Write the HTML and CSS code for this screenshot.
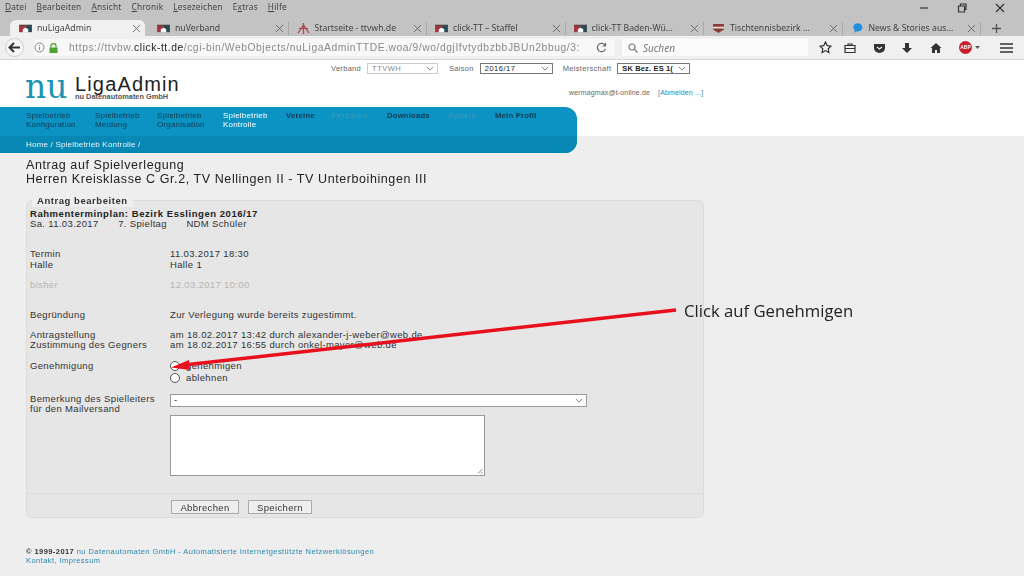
FILE: index.html
```html
<!DOCTYPE html>
<html lang="de">
<head>
<meta charset="utf-8">
<title>nuLigaAdmin</title>
<link rel="stylesheet" href="styles.css">
</head>
<body>
<svg width="0" height="0" class="defs">
  <symbol id="nu" viewBox="0 0 14 12"><path d="M0 2h7v8H0z" fill="#a8323c"/><path d="M7 2h7v8H7z" fill="#2b4a55"/><path d="M4 10V7q3-3 6 0v3z" fill="#fff"/><path d="M0 2h14v1H0z" fill="#444"/></symbol>
  <symbol id="chev" viewBox="0 0 10 6"><path d="M1 1l4 4 4-4" fill="none" stroke="#666" stroke-width="1"/></symbol>
  <symbol id="x" viewBox="0 0 10 10"><path d="M1 1l8 8M9 1l-8 8" fill="none" stroke="#666" stroke-width="1"/></symbol>
</svg>
<header class="chrome">
  <nav class="menubar">
    <span><u>D</u>atei</span><span><u>B</u>earbeiten</span><span><u>A</u>nsicht</span><span><u>C</u>hronik</span><span><u>L</u>esezeichen</span><span>E<u>x</u>tras</span><span><u>H</u>ilfe</span>
    <div class="winctl">
      <svg width="10" height="10" viewBox="0 0 10 10"><path d="M1 5h8" stroke="#333" stroke-width="1.2"/></svg>
      <svg width="10" height="10" viewBox="0 0 10 10"><path d="M1.500 3h6v6h-6zM3.500 3V1h5.500v5.500H7.500" fill="none" stroke="#333" stroke-width="1.200"/></svg>
      <svg width="10" height="10" viewBox="0 0 10 10"><path d="M1 1l8 8M9 1l-8 8" stroke="#333" stroke-width="1.200"/></svg>
    </div>
  </nav>
  <div class="tabs">
    <div class="tab active"><svg class="fav"><use href="#nu"/></svg><span class="tab-t">nuLigaAdmin</span><svg class="tx"><use href="#x"/></svg></div>
    <div class="tab"><svg class="fav"><use href="#nu"/></svg><span class="tab-t">nuVerband</span><svg class="tx"><use href="#x"/></svg></div>
    <div class="tab sep"><svg class="fav" viewBox="0 0 14 12"><path d="M7 0v12M1 11l6-9 6 9M2 6h10" fill="none" stroke="#b5444c" stroke-width="1.300"/></svg><span class="tab-t">Startseite - ttvwh.de</span><svg class="tx"><use href="#x"/></svg></div>
    <div class="tab sep"><svg class="fav"><use href="#nu"/></svg><span class="tab-t">click-TT – Staffel</span><svg class="tx"><use href="#x"/></svg></div>
    <div class="tab sep"><svg class="fav"><use href="#nu"/></svg><span class="tab-t">click-TT Baden-Wü...</span><svg class="tx"><use href="#x"/></svg></div>
    <div class="tab sep"><svg class="fav" viewBox="0 0 14 12"><path d="M1 1h12v6l-6 4-6-4z" fill="#8c3a3a"/><path d="M1 4h12v2H1z" fill="#e8dcc8"/></svg><span class="tab-t">Tischtennisbezirk ...</span><svg class="tx"><use href="#x"/></svg></div>
    <div class="tab sep"><svg class="fav" viewBox="0 0 14 12"><path d="M3 11l1-3a5 4.500 0 1 1 2 1z" fill="#1d8fe0"/></svg><span class="tab-t">News &amp; Stories aus...</span><svg class="tx"><use href="#x"/></svg></div>
    <div class="tab-plus sep"><svg width="11" height="11" viewBox="0 0 11 11"><path d="M5.500 1v9M1 5.500h9" stroke="#555" stroke-width="1.300"/></svg></div>
  </div>
  <div class="toolbar">
    <div class="back"><svg width="13" height="11" viewBox="0 0 13 11"><path d="M1 5.500h11M6 1L1.500 5.500 6 10" fill="none" stroke="#333" stroke-width="2"/></svg></div>
    <div class="urlbar">
      <svg class="ic" width="11" height="11" viewBox="0 0 11 11"><circle cx="5.500" cy="5.500" r="4.500" fill="none" stroke="#888"/><path d="M5.500 5v3M5.500 3v1" stroke="#888"/></svg>
      <svg class="ic" width="9" height="10" viewBox="0 0 9 10"><path d="M2 4.500V3a2.500 2.500 0 0 1 5 0v1.500" fill="none" stroke="#4fa32e" stroke-width="1.300"/><path d="M.5 4.500h8V10h-8z" fill="#4fa32e"/></svg>
      <span class="url">https://ttvbw.<b>click-tt.de</b>/cgi-bin/WebObjects/nuLigaAdminTTDE.woa/9/wo/dgjIfvtydbzbbJBUn2bbug/3:</span>
      <svg class="reload" width="11" height="11" viewBox="0 0 11 11"><path d="M9.500 4A4.200 4.200 0 1 0 9.500 7M9.500 1v3h-3" fill="none" stroke="#666" stroke-width="1.200"/></svg>
    </div>
    <div class="search">
      <svg width="10" height="10" viewBox="0 0 10 10"><circle cx="4" cy="4" r="3" fill="none" stroke="#777" stroke-width="1.200"/><path d="M6.500 6.500L9.500 9.500" stroke="#777" stroke-width="1.300"/></svg>
      <i>Suchen</i>
    </div>
    <div class="tools">
      <svg width="13" height="13" viewBox="0 0 13 13"><path d="M6.500 1l1.700 3.600 3.800.5-2.800 2.600.7 3.800-3.400-1.900-3.400 1.900.7-3.800L1 5.100l3.800-.5z" fill="none" stroke="#333" stroke-width="1.200"/></svg>
      <svg class="t2" width="12" height="12" viewBox="0 0 12 12"><path d="M1 3.500h10v7H1zM4 3.500V2h4v1.500M1 6.500h10" fill="none" stroke="#333" stroke-width="1.200"/></svg>
      <svg class="t3" width="13" height="12" viewBox="0 0 13 12"><path d="M1 2h11v4a5.500 5 0 0 1-11 0z" fill="#333"/><path d="M4 5l2.500 2L9 5" fill="none" stroke="#eee" stroke-width="1.300"/></svg>
      <svg class="t4" width="12" height="12" viewBox="0 0 12 12"><path d="M4 1h4v5h3l-5 5-5-5h3z" fill="#333"/></svg>
      <svg class="t5" width="12" height="12" viewBox="0 0 12 12"><path d="M6 1L.5 6H2v5h3V8h2v3h3V6h1.500z" fill="#333"/></svg>
      <span class="abp">ABP</span><svg class="t6" width="5" height="3" viewBox="0 0 5 3"><path d="M0 0h5L2.500 3z" fill="#555"/></svg>
      <svg class="t7" width="13" height="10" viewBox="0 0 13 10"><path d="M0 1h13M0 5h13M0 9h13" stroke="#333" stroke-width="1.500"/></svg>
    </div>
  </div>
</header>

<div class="head">
  <div class="head-top">
    <div class="logo">
      <span class="logo-nu">nu</span>
      <div class="logo-txt"><span class="logo-la">LigaAdmin</span><span class="logo-sub">nu Datenautomaten GmbH</span></div>
    </div>
    <div class="head-right">
      <div class="filters">
        <label>Verband</label><div class="sel dis w1">TTVWH<svg class="ch"><use href="#chev"/></svg></div>
        <label>Saison</label><div class="sel w2">2016/17<svg class="ch"><use href="#chev"/></svg></div>
        <label>Meisterschaft</label><div class="sel w3"><span class="clip">SK Bez. ES 1(</span><svg class="ch"><use href="#chev"/></svg></div>
      </div>
      <div class="user"><span>wermagmax@t-online.de</span><a>[Abmelden ...]</a></div>
    </div>
  </div>
  <div class="mainnav">
    <div class="navrow">
      <a>Spielbetrieb<br>Konfiguration</a>
      <a>Spielbetrieb<br>Meldung</a>
      <a>Spielbetrieb<br>Organisation</a>
      <a class="cur">Spielbetrieb<br>Kontrolle</a>
      <a class="strong">Vereine</a>
      <a class="off">Personen</a>
      <a class="strong">Downloads</a>
      <a class="off">System</a>
      <a class="strong">Mein Profil</a>
    </div>
    <div class="crumb">Home / Spielbetrieb Kontrolle /</div>
  </div>
</div>

<main class="content">
  <h1>Antrag auf Spielverlegung<br>Herren Kreisklasse C Gr.2, TV Nellingen II - TV Unterboihingen III</h1>
  <section class="panel">
    <div class="legend">Antrag bearbeiten</div>
    <div class="panel-body">
      <div class="line"><b>Rahmenterminplan: Bezirk Esslingen 2016/17</b></div>
      <div class="line meta"><span>Sa. 11.03.2017</span><span>7. Spieltag</span><span>NDM Schüler</span></div>
      <div class="row g20"><span class="k">Termin</span><span>11.03.2017 18:30</span></div>
      <div class="row"><span class="k">Halle</span><span>Halle 1</span></div>
      <div class="row g10 muted"><span class="k">bisher</span><span>12.03.2017 10:00</span></div>
      <div class="row g20"><span class="k">Begründung</span><span>Zur Verlegung wurde bereits zugestimmt.</span></div>
      <div class="row g10"><span class="k">Antragstellung</span><span>am 18.02.2017 13:42 durch alexander-j-weber@web.de</span></div>
      <div class="row"><span class="k">Zustimmung des Gegners</span><span>am 18.02.2017 16:55 durch onkel-mayer@web.de</span></div>
      <div class="row g10"><span class="k">Genehmigung</span>
        <div class="radios">
          <div class="radio"><i></i>genehmigen</div>
          <div class="radio"><i></i>ablehnen</div>
        </div>
      </div>
      <div class="row g10"><span class="k">Bemerkung des Spielleiters<br>für den Mailversand</span>
        <div class="inputs">
          <div class="bigsel">-<svg class="ch"><use href="#chev"/></svg></div>
          <div class="area"><svg width="6" height="6" viewBox="0 0 6 6"><path d="M5.500 1L1 5.500M5.500 4L4 5.500" stroke="#888"/></svg></div>
        </div>
      </div>
    </div>
    <div class="panel-foot"><button>Abbrechen</button><button>Speichern</button></div>
  </section>
  <footer class="foot">
    <div><b>© 1999-2017</b> <a>nu Datenautomaten GmbH - Automatisierte Internetgestützte Netzwerklösungen</a></div>
    <div><a>Kontakt, Impressum</a></div>
  </footer>
</main>

<svg class="arrow" width="1024" height="576" viewBox="0 0 1024 576">
  <path d="M676 310L184 365" stroke="#e8101c" stroke-width="3.500" fill="none"/>
  <path d="M171 367.500L189 360L190 370z" fill="#e8101c"/>
</svg>
<div class="note">Click auf Genehmigen</div>
</body>
</html>
```
FILE: styles.css
```css
* { box-sizing: border-box; }
html, body { margin: 0; height: 576px; overflow: hidden; }
body { position: relative; background: #eeeeee; font-family: "Liberation Sans", Arial, sans-serif; font-size: 9.5px; color: #333; }
.defs { position: absolute; }
.chrome, .head, .content { filter: blur(.35px); }

.chrome { background: #c3c3c3; height: 60px; font-family: "Noto Sans", sans-serif; color: #444; }
.menubar { height: 18px; display: flex; align-items: center; gap: 10px; padding: 0 5px 6px; font-size: 8.300px; letter-spacing: .2px; }
.winctl { margin-left: auto; display: flex; gap: 28px; padding-right: 14px; padding-top: 3px; }
.tabs { height: 18px; display: flex; padding: 2px 0 0 10px; font-size: 8.700px; }
.tab { width: 138.500px; display: flex; align-items: center; gap: 5px; padding: 0 4px 0 8px; position: relative; }
.tab.active { width: 135px; background: #f0f0f0; border-radius: 6px 6px 0 0; padding-left: 9px; margin-right: 4px; }
.sep, .tab-plus { border-left: 1px solid #a8a8a8; }
.tab.sep { border-left: 1px solid #a8a8a8; height: 13px; align-self: center; }
.fav { width: 13px; height: 11px; flex: none; }
.tab-t { flex: 1; white-space: nowrap; overflow: hidden; }
.tx { width: 9px; height: 9px; flex: none; }
.tab-plus { height: 13px; align-self: center; padding-left: 10px; display: flex; align-items: center; }
.toolbar { height: 24px; background: #f0f0f0; border-bottom: 1px solid #d6d6d6; display: flex; align-items: center; padding: 0 8px 0 5px; }
.back { width: 19px; height: 19px; border-radius: 50%; background: #f6f6f6; border: 1px solid #cfcfcf; display: flex; align-items: center; justify-content: center; margin-right: 10px; flex: none; }
.urlbar { width: 580px; height: 17px; display: flex; align-items: center; gap: 4px; background: #f8f8f8; flex: none; }
.urlbar .ic { flex: none; }
.url { flex: 1; margin-left: 7px; font-family: "Liberation Sans", sans-serif; font-size: 10.300px; letter-spacing: .56px; color: #8a8a8a; white-space: nowrap; overflow: hidden; }
.url b { font-weight: normal; color: #222; }
.reload { margin: 0 7px 0 8px; flex: none; }
.search { width: 186px; height: 17px; margin-left: 8px; background: #fbfbfb; display: flex; align-items: center; gap: 5px; padding-left: 6px; font-size: 10px; color: #777; flex: none; }
.tools { flex: 1; display: flex; align-items: center; padding-left: 11px; }
.t2 { margin-left: 12px; }
.t3 { margin-left: 17px; }
.t4 { margin-left: 15px; }
.t5 { margin-left: 17px; }
.abp { margin-left: 17px; width: 13px; height: 13px; border-radius: 50%; background: #c8202c; color: #fff; font: bold 5px/13px "Liberation Sans", sans-serif; text-align: center; }
.t6 { margin-left: 3px; }
.t7 { margin-left: 20px; }

.head { background: #fff; height: 76px; }
.head-top { height: 47px; display: flex; justify-content: space-between; }
.logo { display: flex; padding: 12px 0 0 25px; }
.logo-nu { font: 33px/30px "DejaVu Serif", serif; color: #1b93b4; width: 50px; white-space: nowrap; }
.logo-txt { display: flex; flex-direction: column; margin-top: 3px; }
.logo-la { font-size: 20px; line-height: 18px; letter-spacing: 1.150px; color: #222; }
.logo-sub { font-size: 7.400px; line-height: 7px; font-weight: bold; color: #555; }
.head-right { width: 693px; padding-top: 3px; font-size: 7.500px; color: #666; }
.filters { display: flex; align-items: center; height: 11px; }
.filters label { letter-spacing: .3px; }
.sel { margin-left: 6px; height: 11px; display: flex; align-items: center; justify-content: space-between; border: 1px solid #777; background: #fff; color: #222; padding: 0 3px 0 4px; letter-spacing: .5px; white-space: nowrap; overflow: hidden; }
.sel.dis { border-color: #ccc; color: #888; }
.w1 { width: 71px; margin-right: 11px; }
.w2 { width: 73px; margin-right: 10px; }
.w3 { width: 73px; font-weight: bold; letter-spacing: .15px; }
.clip { overflow: hidden; }
.ch { width: 8px; height: 5px; flex: none; }
.user { display: flex; margin: 15px 0 0 238px; gap: 8px; font-size: 7px; letter-spacing: .15px; }
.user a { color: #2b88ad; }

.mainnav { position: relative; width: 577px; height: 46px; border-radius: 0 12px 12px 0; background: #0b93c3; overflow: hidden; }
.navrow { height: 29px; display: flex; padding: 3.500px 0 0 26px; font-size: 8px; line-height: 9px; color: #12394f; }
.navrow a { white-space: nowrap; letter-spacing: .2px; }
.navrow a:nth-child(1) { width: 69px; }
.navrow a:nth-child(2) { width: 62px; }
.navrow a:nth-child(3) { width: 66px; }
.navrow a:nth-child(4) { width: 63px; }
.navrow a:nth-child(5) { width: 46px; }
.navrow a:nth-child(6) { width: 55px; }
.navrow a:nth-child(7) { width: 61px; }
.navrow a:nth-child(8) { width: 47px; }
.navrow .cur { color: #fff; }
.navrow .strong { font-weight: bold; font-size: 7.700px; }
.navrow .off { color: #3f9dbd; }
.crumb { height: 17px; background: #0787b4; padding: 3.500px 0 0 26px; font-size: 8.100px; color: #e6f4f9; letter-spacing: .15px; }

.content { padding: 22px 0 0 26px; }
h1 { margin: 0; font-size: 12.500px; font-weight: normal; line-height: 14px; color: #222; letter-spacing: .58px; }
.panel { position: relative; width: 678px; height: 318px; margin-top: 14px; background: #e6e6e6; border: 1px solid #dcdcdc; border-radius: 6px; display: flex; flex-direction: column; }
.legend { position: absolute; left: 5px; top: -6px; padding: 0 5px; height: 12px; line-height: 12px; background: #eee; border-radius: 6px 6px 0 0; font-size: 9.500px; font-weight: bold; letter-spacing: .55px; color: #333; }
.panel-body { flex: 1; padding: 8px 0 0 3px; line-height: 10.200px; letter-spacing: .35px; }
.line b { color: #222; letter-spacing: .55px; }
.meta { display: flex; gap: 19.500px; }
.row { display: flex; }
.k { width: 140px; flex: none; }
.g20 { margin-top: 20px; }
.g10 { margin-top: 10px; }
.muted { color: #b5b5b5; }
.radios { display: flex; flex-direction: column; margin-top: -1px; }
.radio { display: flex; align-items: center; gap: 6px; height: 12px; }
.radio i { width: 10px; height: 10px; border: 1px solid #555; border-radius: 50%; background: #fff; }
.inputs { width: 417px; }
.bigsel { height: 13px; border: 1px solid #999; background: #fff; display: flex; justify-content: space-between; align-items: center; padding: 0 3px; }
.area { width: 315px; height: 61px; margin-top: 8px; border: 1px solid #999; background: #fff; display: flex; align-items: flex-end; justify-content: flex-end; padding: 0 1px 1px 0; }
.panel-foot { height: 24px; border-top: 1px solid #dcdcdc; display: flex; gap: 9px; padding: 6px 0 0 144px; }
button { width: 68px; height: 14px; padding: 0; border: 1px solid #aaa; background: #eee; font: 9.500px "Liberation Sans", sans-serif; letter-spacing: .35px; color: #333; }
button + button { width: 64px; }
.foot { margin-top: 29px; font-size: 7.500px; line-height: 9px; letter-spacing: .43px; color: #333; }
.foot a { color: #2b88ad; }

.arrow { position: absolute; left: 0; top: 0; pointer-events: none; }
.note { position: absolute; left: 684px; top: 300px; font: 16.700px/22px "Open Sans", sans-serif; color: #222; white-space: nowrap; }
```
